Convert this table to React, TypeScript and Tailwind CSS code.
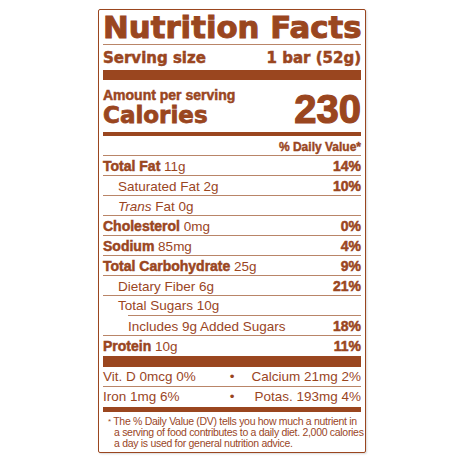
import React from "react";

const brown = "text-[#9a461f]";

type RowProps = {
  label: React.ReactNode;
  amount?: string;
  dv?: string;
  bold?: boolean;
  indent?: string;
  line?: string;
};

const Row = ({ label, amount, dv, bold, indent = "", line = "border-b border-[#b98568]" }: RowProps) => {
  return (
    <div className={`flex justify-between items-start h-[20px] pt-[1px] leading-[18px] ${line}`}>
      <span className={`whitespace-nowrap ${indent}`}>
        {bold ? (
          <span className="font-bold text-[14px] [-webkit-text-stroke:0.5px_#9a461f]">{label}</span>
        ) : (
          <span className="text-[13.5px]">{label}</span>
        )}
        {amount && <span className="text-[13.5px]"> {amount}</span>}
      </span>
      {dv && (
        <span className="font-bold text-[14px] [-webkit-text-stroke:0.5px_#9a461f]">{dv}</span>
      )}
    </div>
  );
};

const App = () => {
  return (
    <div className="w-[466px] h-[466px] bg-white pt-[9px] pl-[98px] font-['Liberation_Sans',Arial,sans-serif]">
      <div className={`w-[268px] border border-[#9a461f] rounded-[2px] px-[4px] shadow-[1px_1px_2px_rgba(0,0,0,0.15)] ${brown}`}>
        {/* heading */}
        <div className="font-['DejaVu_Sans',sans-serif] font-bold text-[30.8px] leading-[34px] whitespace-nowrap border-b border-[#b98568] [-webkit-text-stroke:1px_#9a461f]">
          Nutrition Facts
        </div>
        <div className="flex justify-between pt-[3px] font-['DejaVu_Sans',sans-serif] font-bold text-[15px] leading-[20px] whitespace-nowrap [-webkit-text-stroke:0.5px_#9a461f]">
          <span>Serving size</span>
          <span>1 bar (52g)</span>
        </div>
        <div className="mt-[2px] h-[10px] bg-[#9a461f]" />

        {/* calories */}
        <div className="mt-[7px] flex justify-between items-end">
          <div className="flex flex-col">
            <span className="font-bold text-[14px] leading-[16px] whitespace-nowrap [-webkit-text-stroke:0.5px_#9a461f]">
              Amount per serving
            </span>
            <span className="font-['DejaVu_Sans',sans-serif] font-bold text-[23px] leading-[24px] [-webkit-text-stroke:0.8px_#9a461f]">
              Calories
            </span>
          </div>
          <span className="font-bold text-[40px] leading-[30px] pb-[3px] [-webkit-text-stroke:1.2px_#9a461f]">
            230
          </span>
        </div>
        <div className="mt-[5px] h-[4px] bg-[#9a461f]" />

        <div className="pt-[3px] text-right font-bold text-[12px] leading-[16px] border-b border-[#b98568] [-webkit-text-stroke:0.4px_#9a461f]">
          % Daily Value*
        </div>

        {/* nutrients */}
        <Row label="Total Fat" amount="11g" dv="14%" bold />
        <Row label="Saturated Fat" amount="2g" dv="10%" indent="pl-[15px]" />
        <Row
          label={
            <>
              <i>Trans</i> Fat
            </>
          }
          amount="0g"
          indent="pl-[15px]"
        />
        <Row label="Cholesterol" amount="0mg" dv="0%" bold />
        <Row label="Sodium" amount="85mg" dv="4%" bold />
        <Row label="Total Carbohydrate" amount="25g" dv="9%" bold />
        <Row label="Dietary Fiber" amount="6g" dv="21%" indent="pl-[15px]" />
        <div className="flex h-[20px] pt-[1px] leading-[18px]">
          <span className="pl-[15px] text-[13.5px] w-[25px] whitespace-nowrap">Total Sugars 10g</span>
          <div className="flex-1 border-b border-[#b98568]" />
        </div>
        <Row label="Includes 9g Added Sugars" dv="18%" indent="pl-[25px]" />
        <Row label="Protein" amount="10g" dv="11%" bold line="" />
        <div className="h-[11px] bg-[#9a461f]" />

        {/* vitamins */}
        <div className="grid grid-cols-[1fr_auto_1fr] items-start h-[20px] pt-[1px] leading-[18px] text-[13.5px] border-b border-[#b98568] whitespace-nowrap">
          <span>Vit. D 0mcg 0%</span>
          <span className="px-[2px]">•</span>
          <span className="text-right">Calcium 21mg 2%</span>
        </div>
        <div className="grid grid-cols-[1fr_auto_1fr] items-start h-[20px] pt-[1px] leading-[18px] text-[13.5px] whitespace-nowrap">
          <span>Iron 1mg 6%</span>
          <span className="px-[2px]">•</span>
          <span className="text-right">Potas. 193mg 4%</span>
        </div>
        <div className="h-[5px] bg-[#9a461f]" />

        {/* footnote */}
        <div className="pt-[4px] pb-[3px] pl-[11px] text-[10.5px] leading-[11px] tracking-[-0.3px] whitespace-nowrap">
          <div className="-ml-[6px]">
            <span className="text-[8px] align-top">*</span> The % Daily Value (DV) tells you how much a nutrient in
          </div>
          <div>a serving of food contributes to a daily diet. 2,000 calories</div>
          <div>a day is used for general nutrition advice.</div>
        </div>
      </div>
    </div>
  );
};

export default App;
